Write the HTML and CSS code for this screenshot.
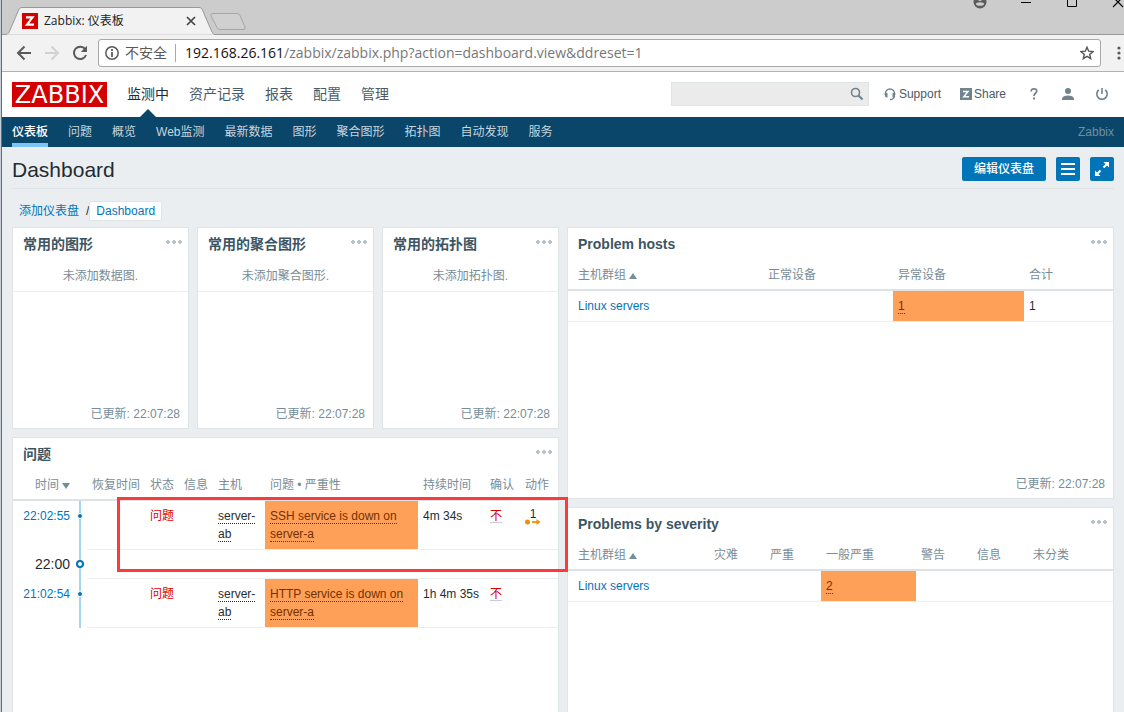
FILE: index.html
```html
<!DOCTYPE html>
<html lang="zh-CN">
<head>
<meta charset="utf-8">
<title>Zabbix: 仪表板</title>
<link rel="stylesheet" href="styles.css">
</head>
<body>
<div class="window">
  <div class="tabstrip">
    <div class="tab">
      <svg class="tab-shape" width="240" height="28" viewBox="0 0 240 28"><path d="M0 27.500L2 25.500L12 2Q13 .5 15 .5H192Q194 .5 195 2L205 25L207 27.500" fill="#f2f2f2" stroke="#999"/><path d="M0 28H207" stroke="#f2f2f2"/><path d="M206 6.500H230Q232 6.500 233 8.500L238 20Q239 22.500 236 22.500H213Q211 22.500 210 20.500L204 9Q203 6.500 206 6.500Z" fill="#d0d0d0" stroke="#a6a6a6"/></svg>
      <svg class="favicon" width="16" height="16" viewBox="0 0 16 16"><path fill="#d40000" d="M0 0h16v16H0z"/><path d="M4 4.300h6.500L5 11.700H12" fill="none" stroke="#fff" stroke-width="2.200"/></svg>
      <span class="tab-title">Zabbix: 仪表板</span>
      <button class="plain tab-close" aria-label="Close tab"><svg width="10" height="10" viewBox="0 0 10 10"><path d="M1 1l8 8M9 1L1 9" stroke="#444" stroke-width="1.700"/></svg></button>
    </div>
    <div class="controls">
      <button class="plain" aria-label="Profile"><svg width="46" height="10" viewBox="0 0 46 10"><circle cx="23" cy="2" r="6.500" fill="#5c5c5c"/><ellipse cx="23" cy="4" rx="4" ry="1.800" fill="#ccc"/><circle cx="23" cy="-1" r="2" fill="#ccc"/></svg></button>
      <button class="plain" aria-label="Minimize"><svg width="46" height="10" viewBox="0 0 46 10"><path d="M18 2.500h10" stroke="#000"/></svg></button>
      <button class="plain" aria-label="Maximize"><svg width="46" height="10" viewBox="0 0 46 10"><path d="M18.500-3.500h9v10h-9z" fill="none" stroke="#000"/></svg></button>
      <button class="plain last" aria-label="Close"><svg width="29" height="10" viewBox="0 0 29 10"><path d="M18-3L28 7M28-3L18 7" stroke="#000" stroke-width="1.200"/></svg></button>
    </div>
  </div>

  <div class="toolbar">
    <button class="plain" aria-label="Back"><svg width="16" height="16" viewBox="0 0 16 16"><path d="M15 8H2M8.500 1.500L2 8l6.500 6.500" fill="none" stroke="#5a5a5a" stroke-width="2"/></svg></button>
    <button class="plain" aria-label="Forward"><svg width="16" height="16" viewBox="0 0 16 16"><path d="M1 8h13M7.500 1.500L14 8l-6.500 6.500" fill="none" stroke="#d2d2d2" stroke-width="2"/></svg></button>
    <button class="plain" aria-label="Reload"><svg width="16" height="16" viewBox="0 0 16 16"><path d="M13.200 4.200A6.200 6.200 0 1 0 14 10" fill="none" stroke="#5a5a5a" stroke-width="2"/><path d="M15 .8V7H8.800z" fill="#5a5a5a"/></svg></button>
    <div class="omnibox">
      <svg width="14" height="14" viewBox="0 0 14 14"><circle cx="7" cy="7" r="6.200" fill="none" stroke="#5a5a5a" stroke-width="1.500"/><path d="M7 3v2M7 6v5" stroke="#5a5a5a" stroke-width="1.800"/></svg>
      <span class="insecure">不安全</span>
      <span class="url"><b>192.168.26.161</b>/zabbix/zabbix.php?action=dashboard.view&amp;ddreset=1</span>
      <button class="plain" aria-label="Bookmark"><svg width="14" height="14" viewBox="0 0 14 14"><path d="M7 1.200l1.700 4 4.300.4-3.300 2.800 1 4.200L7 10.400l-3.700 2.200 1-4.200L1 5.600l4.300-.4z" fill="none" stroke="#555" stroke-width="1.400"/></svg></button>
    </div>
    <button class="plain" aria-label="Menu"><svg width="4" height="14" viewBox="0 0 4 14"><g fill="#5a5a5a"><circle cx="2" cy="2" r="1.600"/><circle cx="2" cy="7" r="1.600"/><circle cx="2" cy="12" r="1.600"/></g></svg></button>
  </div>

  <header class="header">
    <a class="logo" href="#">ZABBIX</a>
    <nav class="menu">
      <a class="active" href="#">监测中</a><a href="#">资产记录</a><a href="#">报表</a><a href="#">配置</a><a href="#">管理</a>
    </nav>
    <form class="search">
      <input type="text" aria-label="Search">
      <button class="plain" type="button" aria-label="Search"><svg width="14" height="14" viewBox="0 0 14 14"><circle cx="5.500" cy="5.500" r="4" fill="none" stroke="#71838f" stroke-width="1.600"/><path d="M8.500 8.500L12.500 12.500" stroke="#71838f" stroke-width="2.200"/></svg></button>
    </form>
    <a class="tool support" href="#"><svg width="12" height="14" viewBox="0 0 12 14"><path d="M1.500 8V6.500A4.500 4.500 0 0 1 10.500 6.500V8" fill="none" stroke="#71838f" stroke-width="1.500"/><path d="M.8 6h2.700v4.500H2.500Q.8 10 .8 8zM11.200 6H8.500v4.500h1Q11.200 10 11.200 8z" fill="#71838f"/><path d="M10.500 9Q10 12.500 6 12.500" fill="none" stroke="#71838f" stroke-width="1.500"/></svg>Support</a>
    <a class="tool share" href="#"><svg width="12" height="12" viewBox="0 0 12 12"><path fill="#71838f" d="M0 0h12v12H0z"/><path d="M3 3.500h5L3.800 8.800H9" fill="none" stroke="#fff" stroke-width="1.500"/></svg>Share</a>
    <a class="tool help" href="#" aria-label="Help"><svg width="8" height="14" viewBox="0 0 8 14"><path d="M1.200 4.500V4Q1.200 1.800 4 1.800T6.800 4Q6.800 5.300 5.400 6.300T4 9" fill="none" stroke="#71838f" stroke-width="1.700"/><path d="M3 10.500h2v2H3z" fill="#71838f"/></svg></a>
    <a class="tool user" href="#" aria-label="Profile"><svg width="12" height="14" viewBox="0 0 12 14"><circle cx="6" cy="4" r="3" fill="#71838f"/><path d="M0 13V11.500Q1 8.500 6 8.500T12 11.500V13z" fill="#71838f"/></svg></a>
    <a class="tool power" href="#" aria-label="Sign out"><svg width="14" height="14" viewBox="0 0 14 14"><path d="M3.800 3A5.200 5.200 0 1 0 10.200 3" fill="none" stroke="#71838f" stroke-width="1.600"/><path d="M7 1v6" stroke="#71838f" stroke-width="1.600"/></svg></a>
  </header>

  <nav class="subnav">
    <a class="active" href="#">仪表板</a><a href="#">问题</a><a href="#">概览</a><a href="#">Web监测</a><a href="#">最新数据</a><a href="#">图形</a><a href="#">聚合图形</a><a href="#">拓扑图</a><a href="#">自动发现</a><a href="#">服务</a>
    <span class="server">Zabbix</span>
  </nav>

  <main class="page">
    <div class="titlebar">
      <h1>Dashboard</h1>
      <button class="btn edit">编辑仪表盘</button>
      <button class="btn square" aria-label="Actions"><svg width="14" height="14" viewBox="0 0 14 14"><path d="M0 2h14M0 7h14M0 12h14" stroke="#fff" stroke-width="2"/></svg></button>
      <button class="btn square" aria-label="Fullscreen"><svg width="14" height="14" viewBox="0 0 14 14"><path d="M8.500 0H14v5.500zM0 8.500V14h5.500z" fill="#fff"/><path d="M8.500 5.500l3-3M5.500 8.500l-3 3" stroke="#fff" stroke-width="2"/></svg></button>
    </div>
    <div class="crumbs"><a href="#">添加仪表盘</a><span>/</span><a class="current" href="#">Dashboard</a></div>

    <div class="dashboard">
      <div class="column">
        <div class="trio">
          <section class="widget small"><div class="head"><h2>常用的图形</h2><button class="plain dots" aria-label="Options"></button></div><p class="empty">未添加数据图.</p><p class="updated">已更新: 22:07:28</p></section>
          <section class="widget small"><div class="head"><h2>常用的聚合图形</h2><button class="plain dots" aria-label="Options"></button></div><p class="empty">未添加聚合图形.</p><p class="updated">已更新: 22:07:28</p></section>
          <section class="widget small"><div class="head"><h2>常用的拓扑图</h2><button class="plain dots" aria-label="Options"></button></div><p class="empty">未添加拓扑图.</p><p class="updated">已更新: 22:07:28</p></section>
        </div>
        <section class="widget fill">
          <div class="head"><h2>问题</h2><button class="plain dots" aria-label="Options"></button></div>
          <table class="problems">
            <colgroup><col class="c-time"><col class="c-axis"><col class="c-recovery"><col class="c-status"><col class="c-status"><col class="c-host"><col><col class="c-duration"><col class="c-ack"><col class="c-action"></colgroup>
            <thead><tr><th class="time"><span class="sort down">时间</span></th><th></th><th>恢复时间</th><th>状态</th><th>信息</th><th>主机</th><th>问题 • 严重性</th><th>持续时间</th><th>确认</th><th>动作</th></tr></thead>
            <tbody>
              <tr><td class="time"><a href="#">22:02:55</a></td><td class="axis"><i class="dot"></i></td><td></td><td class="red">问题</td><td></td><td><span class="hint">server-ab</span></td><td class="average"><span class="hint">SSH service is down on server-a</span></td><td>4m 34s</td><td><a class="red ack" href="#">不</a></td><td class="action"><span>1</span><svg width="16" height="6" viewBox="0 0 16 6"><circle cx="2.500" cy="3" r="2.500" fill="#f18f0b"/><path d="M7 3h6" stroke="#f18f0b" stroke-width="1.800"/><path d="M11.500 0v6L15.500 3z" fill="#f18f0b"/></svg></td></tr>
              <tr class="hour"><td class="time">22:00</td><td class="axis"><i class="ring"></i></td><td colspan="8"></td></tr>
              <tr><td class="time"><a href="#">21:02:54</a></td><td class="axis"><i class="dot"></i></td><td></td><td class="red">问题</td><td></td><td><span class="hint">server-ab</span></td><td class="average"><span class="hint">HTTP service is down on server-a</span></td><td>1h 4m 35s</td><td><a class="red ack" href="#">不</a></td><td></td></tr>
            </tbody>
          </table>
          <div class="highlight"></div>
        </section>
      </div>

      <div class="column">
        <section class="widget hosts">
          <div class="head"><h2>Problem hosts</h2><button class="plain dots" aria-label="Options"></button></div>
          <table>
            <colgroup><col><col class="c-ok"><col class="c-bad"><col class="c-total"></colgroup>
            <thead><tr><th><span class="sort up">主机群组</span></th><th>正常设备</th><th>异常设备</th><th>合计</th></tr></thead>
            <tbody><tr><td><a href="#">Linux servers</a></td><td></td><td class="average"><span class="hint">1</span></td><td>1</td></tr></tbody>
          </table>
          <p class="updated">已更新: 22:07:28</p>
        </section>
        <section class="widget fill">
          <div class="head"><h2>Problems by severity</h2><button class="plain dots" aria-label="Options"></button></div>
          <table>
            <colgroup><col><col class="c-sev"><col class="c-sev"><col class="c-avg"><col class="c-sev"><col class="c-sev"><col class="c-none"></colgroup>
            <thead><tr><th><span class="sort up">主机群组</span></th><th>灾难</th><th>严重</th><th>一般严重</th><th>警告</th><th>信息</th><th>未分类</th></tr></thead>
            <tbody><tr><td><a href="#">Linux servers</a></td><td></td><td></td><td class="average"><span class="hint">2</span></td><td></td><td></td><td></td></tr></tbody>
          </table>
        </section>
      </div>
    </div>
  </main>
</div>
</body>
</html>
```

FILE: styles.css
```css
* { box-sizing: border-box; }

body {
  margin: 0;
  background: #c8ced6;
  color: #1f2c33;
  font: 12px/18px "Liberation Sans", "Noto Sans CJK SC", sans-serif;
}

a { color: #0275b8; text-decoration: none; }
svg { display: block; flex: none; }
h1, h2, p { margin: 0; }
.plain { padding: 0; border: 0; background: none; }

.window {
  display: flex;
  flex-direction: column;
  min-height: 100vh;
  margin-left: 1px;
  background: #ebeef0;
  border-left: 1px solid #2a7dc9;
}

/* Browser tabs */
.tabstrip {
  display: flex;
  justify-content: space-between;
  height: 35px;
  background: #ccc;
  border-bottom: 1px solid #999;
  font-family: "Open Sans", "Noto Sans CJK SC", sans-serif;
}
.tab {
  position: relative;
  display: flex;
  align-items: center;
  width: 240px;
  height: 28px;
  margin: 7px 0 0 5px;
  padding-left: 15px;
  gap: 6px;
}
.tab-shape { position: absolute; left: 0; top: 0; }
.favicon, .tab-title, .tab-close { position: relative; }
.tab-title { width: 136px; color: #222; }
.controls { display: flex; align-items: flex-start; }
.controls button { width: 46px; }
.controls .last { width: 29px; }

/* Address bar */
.toolbar {
  display: flex;
  align-items: center;
  gap: 12px;
  height: 37px;
  padding: 0 3px 0 14px;
  background: #f2f2f2;
  border-bottom: 1px solid #b2b2b2;
}
.omnibox {
  flex: 1;
  display: flex;
  align-items: center;
  height: 28px;
  margin: 0 4px 0 -2px;
  padding: 0 6px;
  background: #fff;
  border: 1px solid #a8a8a8;
  border-radius: 3px;
  font-family: "Open Sans", "Noto Sans CJK SC", sans-serif;
  font-size: 14px;
}
.insecure {
  margin-left: 6px;
  padding-right: 8px;
  border-right: 1px solid #aaa;
  color: #5a5a5a;
}
.url { flex: 1; padding-left: 9px; color: #777; white-space: nowrap; }
.url b { color: #111; font-weight: normal; }

/* Application header */
.header {
  display: flex;
  align-items: center;
  height: 45px;
  padding: 0 15px 0 10px;
  background: #fff;
}
.logo {
  width: 95px;
  height: 25px;
  background: #d40000;
  color: #fff;
  font: 24px/26px "DejaVu Sans", sans-serif;
  text-align: center;
}
.menu { display: flex; flex: 1; gap: 20px; margin-left: 20px; font-size: 14px; }
.menu a { position: relative; color: #4b5a64; line-height: 45px; white-space: nowrap; }
.menu .active { color: #1f2c33; }
.menu .active::after {
  content: "";
  position: absolute;
  left: 50%;
  bottom: 0;
  margin-left: -8px;
  border: 8px solid transparent;
  border-top: 0;
  border-bottom-color: #0a466a;
}
.search, .tool { margin-bottom: 1px; }
.search {
  display: flex;
  align-items: center;
  width: 198px;
  height: 24px;
  padding-right: 4px;
  background: #ebebeb;
  border: 1px solid #dfe4e7;
}
.search input { flex: 1; min-width: 0; border: 0; background: none; }
.tool { display: flex; align-items: center; gap: 2px; color: #4b5a64; }
.support { gap: 3px; margin-left: 15px; }
.share { margin-left: 19px; }
.help { margin-left: 24px; }
.user { margin-left: 24px; }
.power { margin-left: 21px; }

.subnav { display: flex; gap: 20px; padding: 0 10px; background: #0a466a; }
.subnav a { height: 30px; color: #c6d5de; line-height: 30px; white-space: nowrap; }
.subnav .active { color: #fff; border-bottom: 4px solid #7dc4f5; font-weight: 500; }
.server { margin-left: auto; color: #6f8ea0; line-height: 30px; }

/* Page title */
.page { display: flex; flex: 1; flex-direction: column; padding: 0 10px; }
.titlebar {
  display: flex;
  align-items: center;
  gap: 10px;
  height: 42px;
  padding-top: 2px;
  border-bottom: 1px solid #dfe4e7;
}
h1 { flex: 1; padding-top: 2px; font-size: 21px; font-weight: normal; line-height: 30px; }
.btn {
  display: flex;
  align-items: center;
  justify-content: center;
  height: 24px;
  padding: 0;
  border: 0;
  border-radius: 2px;
  background: #0275b8;
  color: #fff;
  font: 500 12px/18px "Liberation Sans", "Noto Sans CJK SC", sans-serif;
}
.edit { width: 84px; padding-top: 1px; }
.square { width: 24px; }
.crumbs { display: flex; align-items: center; height: 38px; padding: 5px 0 0 7px; }
.crumbs span { margin-left: 7px; }
.crumbs .current { padding: 0 6px; background: #fff; border: 1px solid #dfe4e7; border-radius: 2px; }

/* Widgets */
.dashboard { display: grid; flex: 1; grid-template-columns: 1fr 1fr; gap: 8px; }
.column { display: flex; flex-direction: column; gap: 8px; min-width: 0; }
.trio { display: grid; grid-template-columns: repeat(3, 1fr); gap: 8px; }
.widget {
  position: relative;
  display: flex;
  flex-direction: column;
  background: #fff;
  border: 1px solid #dfe4e7;
}
.small { min-height: 202px; }
.hosts { min-height: 272px; }
.fill { flex: 1; border-bottom: 0; }
.head { display: flex; justify-content: space-between; height: 31px; padding: 7px 5px 0 10px; }
h2 { color: #3c5563; font-size: 14px; line-height: 18px; }
.dots {
  width: 18px;
  height: 14px;
  background: radial-gradient(circle at center, #b8c4cb 1px, #b8c4cb 2px, transparent 2px) 0 0 / 6px 14px;
}
.empty { height: 33px; padding-top: 8px; border-bottom: 1px solid #ebeef0; color: #768d99; text-align: center; }
.updated { margin-top: auto; padding: 0 8px 5px; color: #768d99; text-align: right; }

/* Tables */
table { width: 100%; table-layout: fixed; border-collapse: separate; border-spacing: 0; }
th, td { padding: 6px 5px; text-align: left; vertical-align: top; }
th { padding-top: 7px; padding-bottom: 5px; border-bottom: 2px solid #dce2e5; color: #768d99; font-weight: normal; white-space: nowrap; }
td { height: 31px; border-bottom: 1px solid #ebeef0; }
th:first-child, td:first-child { padding-left: 10px; }
.sort::after {
  content: "";
  display: inline-block;
  margin-left: 3px;
  border: 4px solid transparent;
}
.sort.up::after { border-top: 0; border-bottom: 6px solid #768d99; }
.sort.down::after { border-bottom: 0; border-top: 6px solid #768d99; }
.average { background: #ffa059; color: #733100; }
.hint { border-bottom: 1px dotted; }
.red { color: #dc0000; }
.ack { display: inline-block; height: 16px; line-height: 18px; border-bottom: 1px solid #ccc; }

.problems .time { padding-left: 0; border-bottom-color: transparent; text-align: right; }
.problems th.time { border-bottom-color: #dce2e5; }
.problems .hour .time { padding: 5px; font-size: 14px; }
.problems .hour td { height: 29px; }
.problems .axis {
  padding: 0;
  border: 0;
  background: linear-gradient(#a8d6ef, #a8d6ef) 4px 0 / 2px 100% no-repeat;
}
.dot, .ring { display: block; background: #0275b8; border: 1px solid #fff; border-radius: 50%; }
.dot { width: 6px; height: 6px; margin: 12px 0 0 2px; }
.ring { width: 8px; height: 8px; margin: 10px 0 0 1px; background: #fff; border: 2px solid #0275b8; }
.action span { display: block; width: 16px; height: 12px; line-height: 14px; text-align: center; }

.c-time { width: 62px; }
.c-axis { width: 12px; }
.c-recovery { width: 58px; }
.c-status { width: 34px; }
.c-host { width: 52px; }
.c-duration { width: 67px; }
.c-ack { width: 35px; }
.c-action { width: 38px; }
.c-ok { width: 130px; }
.c-bad { width: 131px; }
.c-total { width: 89px; }
.c-sev { width: 56px; }
.c-avg { width: 95px; }
.c-none { width: 85px; }

/* Red frame drawn round the newest problem */
.highlight {
  position: absolute;
  top: 59px;
  left: 104px;
  right: -10px;
  height: 75px;
  border: 3px solid #fb3a3a;
  z-index: 1;
}
```
